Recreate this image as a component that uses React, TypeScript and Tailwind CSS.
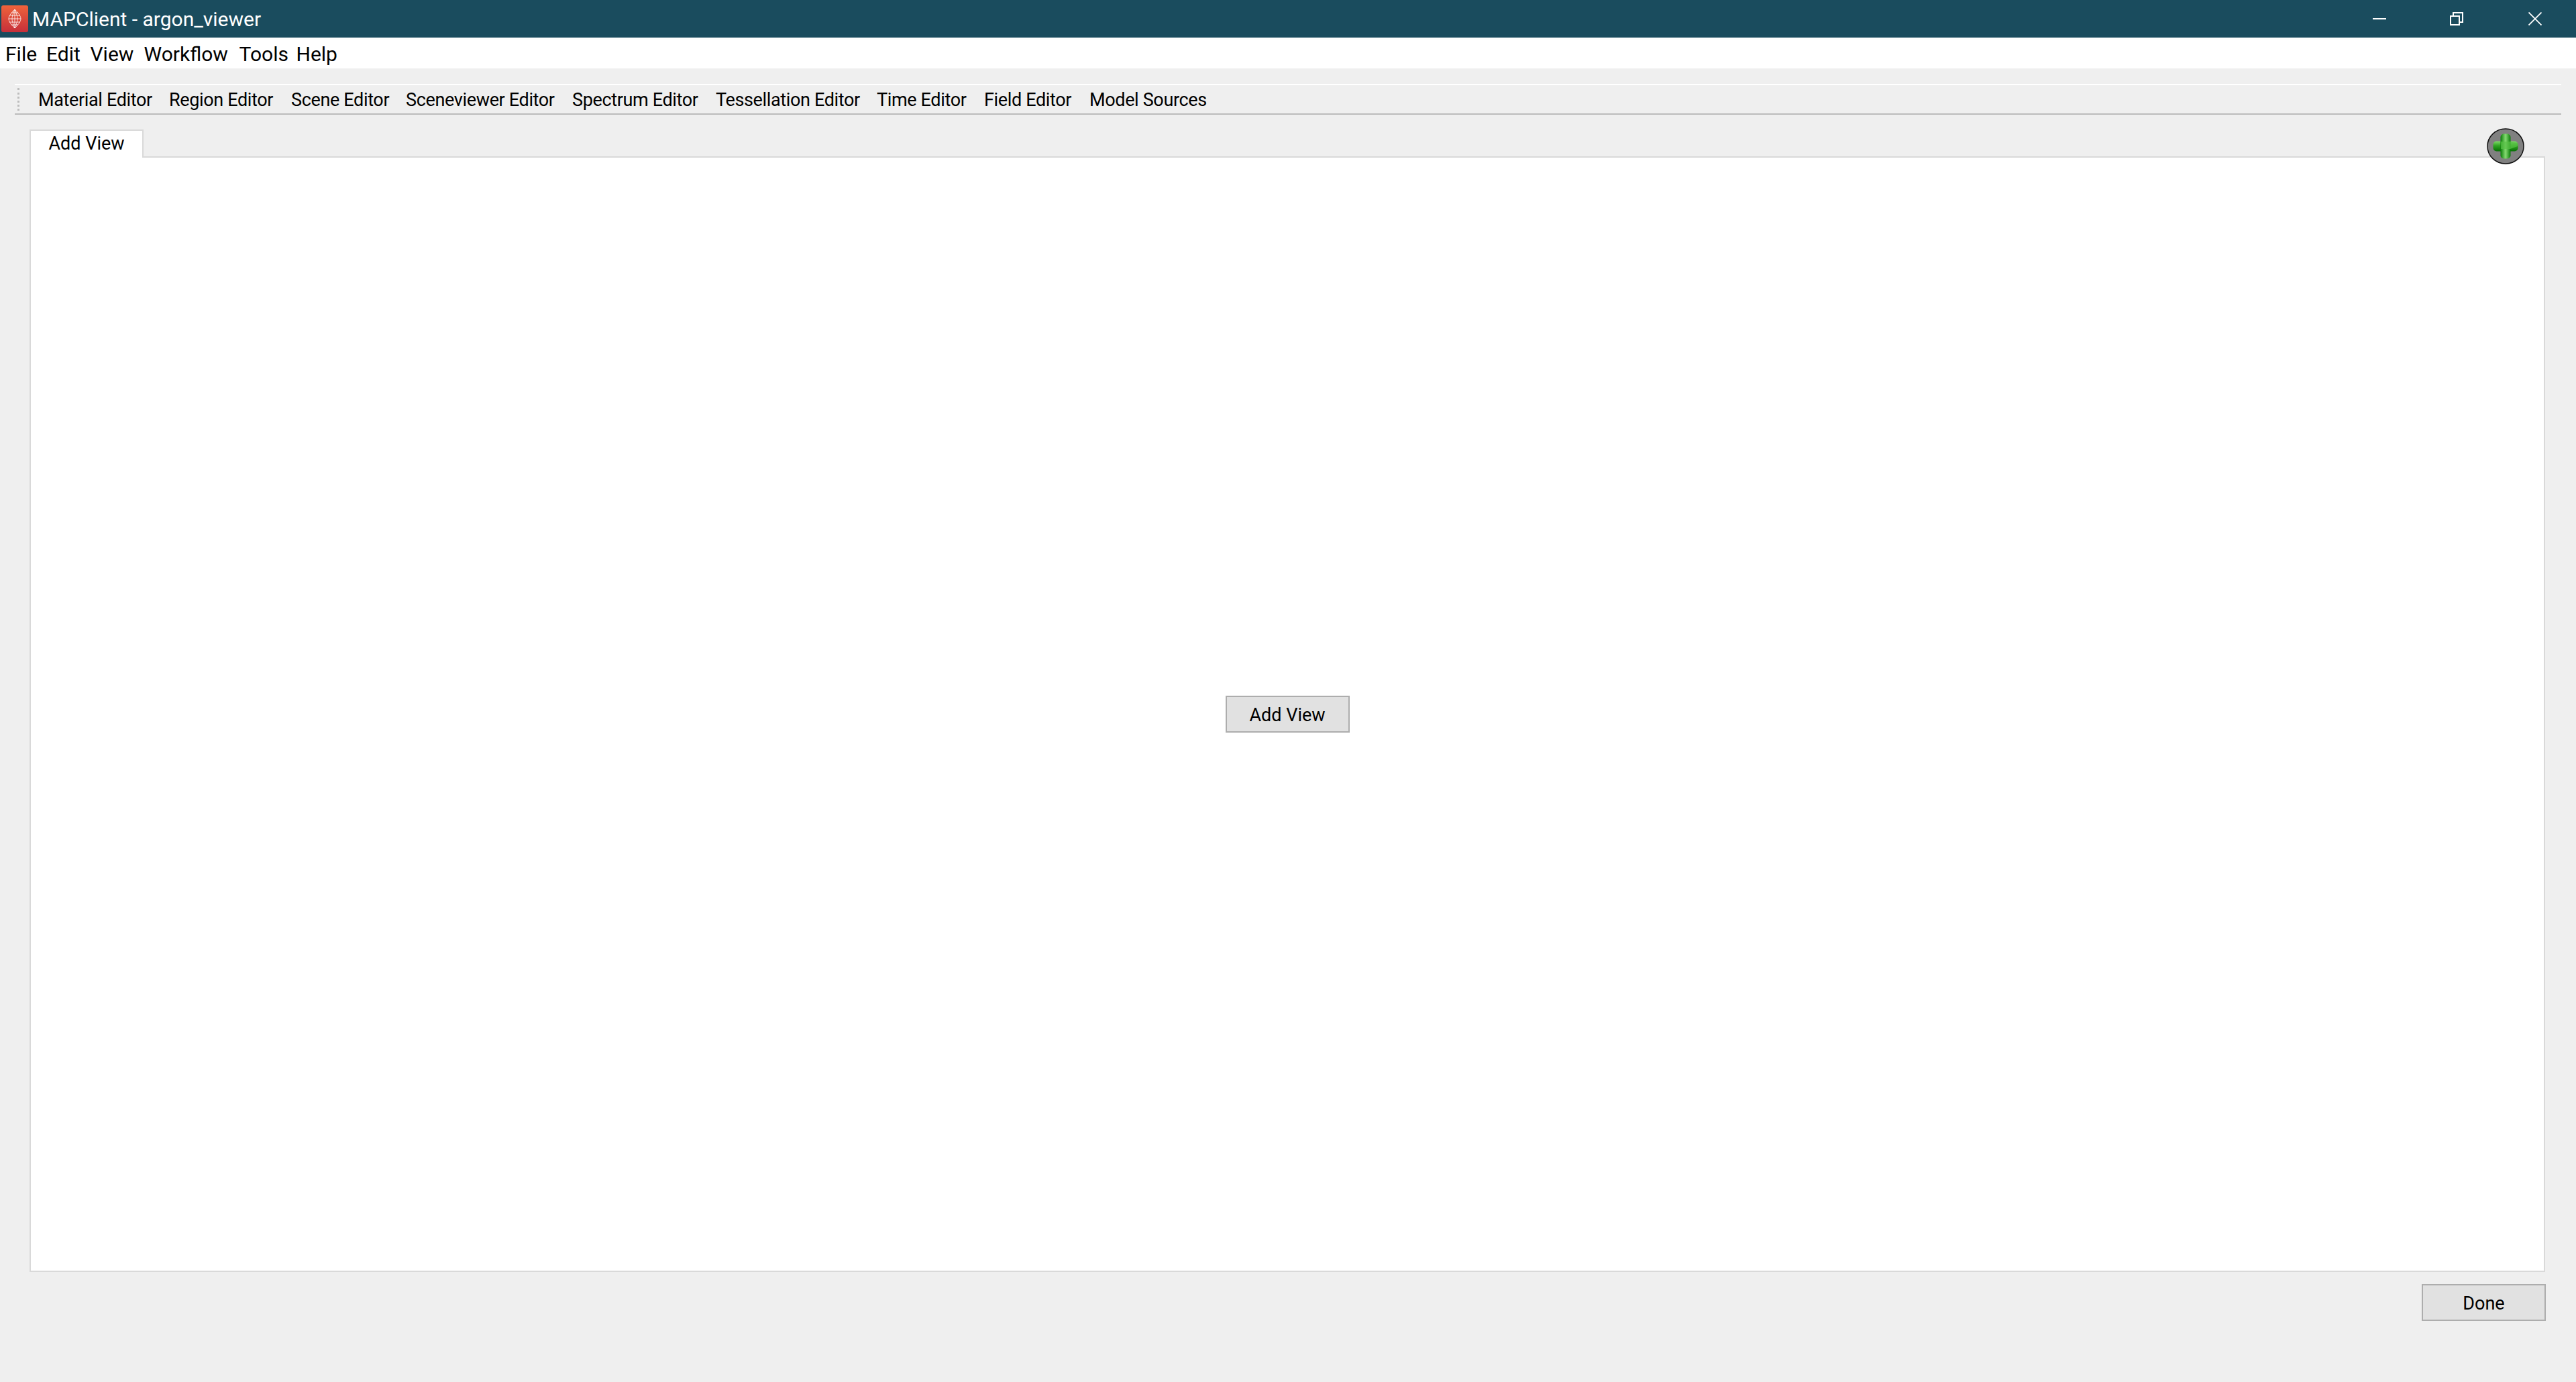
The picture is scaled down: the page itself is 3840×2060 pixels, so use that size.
const font = "font-['Roboto',sans-serif] leading-none text-black";

const menus = [
  { label: "File", w: "w-[43px]" },
  { label: "Edit", w: "w-[47.5px]" },
  { label: "View", w: "w-[62px]" },
  { label: "Workflow", w: "w-[124px]" },
  { label: "Tools", w: "w-[67px]" },
  { label: "Help", w: "w-[60px]" },
];

const tools = [
  { label: "Material Editor", w: "w-[171.5px]" },
  { label: "Region Editor", w: "w-[158.5px]" },
  { label: "Scene Editor", w: "w-[147.5px]" },
  { label: "Sceneviewer Editor", w: "w-[224.5px]" },
  { label: "Spectrum Editor", w: "w-[190.5px]" },
  { label: "Tessellation Editor", w: "w-[216.5px]" },
  { label: "Time Editor", w: "w-[136.5px]" },
  { label: "Field Editor", w: "w-[133.5px]" },
  { label: "Model Sources", w: "w-[170px]" },
];

const AppIcon = () => (
  <svg width="40" height="40" viewBox="0 0 40 40" className="shrink-0">
    <defs>
      <linearGradient id="appBg" x1="0" y1="0" x2="0" y2="1">
        <stop offset="0" stopColor="#ee633b" />
        <stop offset="1" stopColor="#c62f3a" />
      </linearGradient>
    </defs>
    <rect width="40" height="40" rx="3" fill="url(#appBg)" />
    <g fill="none" stroke="#fff" strokeOpacity="0.8" strokeWidth="1">
      <path d="M20 6C27 13 29 17 29 20C29 23 27 27 20 34C13 27 11 23 11 20C11 17 13 13 20 6Z" />
      <path d="M20 6C17 13 16 17 16 20C16 23 17 27 20 34C23 27 24 23 24 20C24 17 23 13 20 6Z" />
      <path d="M20 6V34M12 15H28M11 20H29M12 25H28M15 11H25M15 29H25" />
    </g>
  </svg>
);

const WindowControls = () => (
  <div className="flex h-full items-center">
    <svg width="20" height="20" viewBox="0 0 20 20" className="mr-[95px]">
      <path d="M0 10H20" stroke="#fff" strokeWidth="2" />
    </svg>
    <svg width="20" height="20" viewBox="0 0 20 20" className="mr-[97px]">
      <path d="M1 6H14V19H1ZM5 6V1H19V15H14" fill="none" stroke="#fff" strokeWidth="2" />
    </svg>
    <svg width="20" height="20" viewBox="0 0 20 20" className="mr-[51px]">
      <path d="M0.5 0.5L19.5 19.5M19.5 0.5L0.5 19.5" stroke="#fff" strokeWidth="1.8" />
    </svg>
  </div>
);

const AddTabIcon = () => (
  <svg width="56" height="54" viewBox="0 0 56 54">
    <defs>
      <linearGradient id="plusH" x1="0" y1="0" x2="0" y2="1">
        <stop offset="0" stopColor="#7fd86a" />
        <stop offset="0.45" stopColor="#2fa322" />
        <stop offset="1" stopColor="#066f05" />
      </linearGradient>
      <linearGradient id="plusV" x1="0" y1="0" x2="1" y2="0">
        <stop offset="0" stopColor="#0a7d08" />
        <stop offset="0.5" stopColor="#86db72" />
        <stop offset="1" stopColor="#0a7d08" />
      </linearGradient>
    </defs>
    <ellipse cx="28" cy="27" rx="27" ry="26" fill="#808080" stroke="#111" strokeWidth="1.5" />
    <rect x="9.5" y="19.5" width="37" height="15" rx="5" fill="url(#plusH)" />
    <rect x="20.5" y="8.5" width="15" height="37" rx="5" fill="url(#plusV)" />
    <path d="M21 20H35L46 23V27L35 31H21Z" fill="#58c246" opacity="0.7" />
  </svg>
);

const App = () => {
  return (
    <div className="relative flex h-[2060px] w-[3840px] flex-col overflow-hidden bg-[#efefef]">
      <header className="flex h-[56px] shrink-0 items-center justify-between bg-[#1a4c5e]">
        <div className="flex items-center">
          <div className="ml-[2px]">
            <AppIcon />
          </div>
          <span className="ml-[6px] mt-[2px] font-['Roboto',sans-serif] text-[30px] leading-none text-white">
            MAPClient - argon_viewer
          </span>
        </div>
        <WindowControls />
      </header>

      <nav className="flex h-[46px] shrink-0 items-center gap-[18px] bg-white pl-[8px] pt-[3px]">
        {menus.map((m) => (
          <span key={m.label} className={`${font} ${m.w} whitespace-nowrap text-[30px]`}>
            {m.label}
          </span>
        ))}
      </nav>

      <div className="ml-[22px] mt-[23px] flex h-[46px] w-[3796px] shrink-0 items-center border-b-2 border-t-2 border-b-[#bbbbbb] border-t-white">
        <div className="ml-[4px] mr-[28px] h-[34px] w-[3px] border-l-[3px] border-dotted border-[#bdbdbd]" />
        <div className="flex items-center gap-[23.5px] pt-[2px]">
          {tools.map((t) => (
            <span key={t.label} className={`${font} ${t.w} whitespace-nowrap text-[27px] tracking-[-0.35px]`}>
              {t.label}
            </span>
          ))}
        </div>
      </div>

      <div className="mt-[22px] flex min-h-0 flex-1 flex-col pb-[91px] pl-[44px] pr-[46px]">
        <div className="z-10 -mb-[2px] flex h-[42px] w-[170px] shrink-0 items-center justify-center border-l-2 border-r-2 border-t-2 border-[#d9d9d9] bg-white pb-[2px]">
          <span className={`${font} text-[27px]`}>Add View</span>
        </div>
        <div className="flex flex-1 items-center justify-center border-2 border-[#d9d9d9] bg-white">
          <button className={`${font} h-[55px] w-[185px] border-2 border-[#adadad] bg-[#e1e1e1] pt-[3px] text-[27px]`}>
            Add View
          </button>
        </div>
        <div className="-mr-[1px] mt-[18px] flex justify-end">
          <button className={`${font} h-[55px] w-[185px] border-2 border-[#adadad] bg-[#e1e1e1] pt-[3px] text-[27px]`}>
            Done
          </button>
        </div>
      </div>

      <div className="absolute left-[3707px] top-[191px]">
        <AddTabIcon />
      </div>
    </div>
  );
};

export default App;
